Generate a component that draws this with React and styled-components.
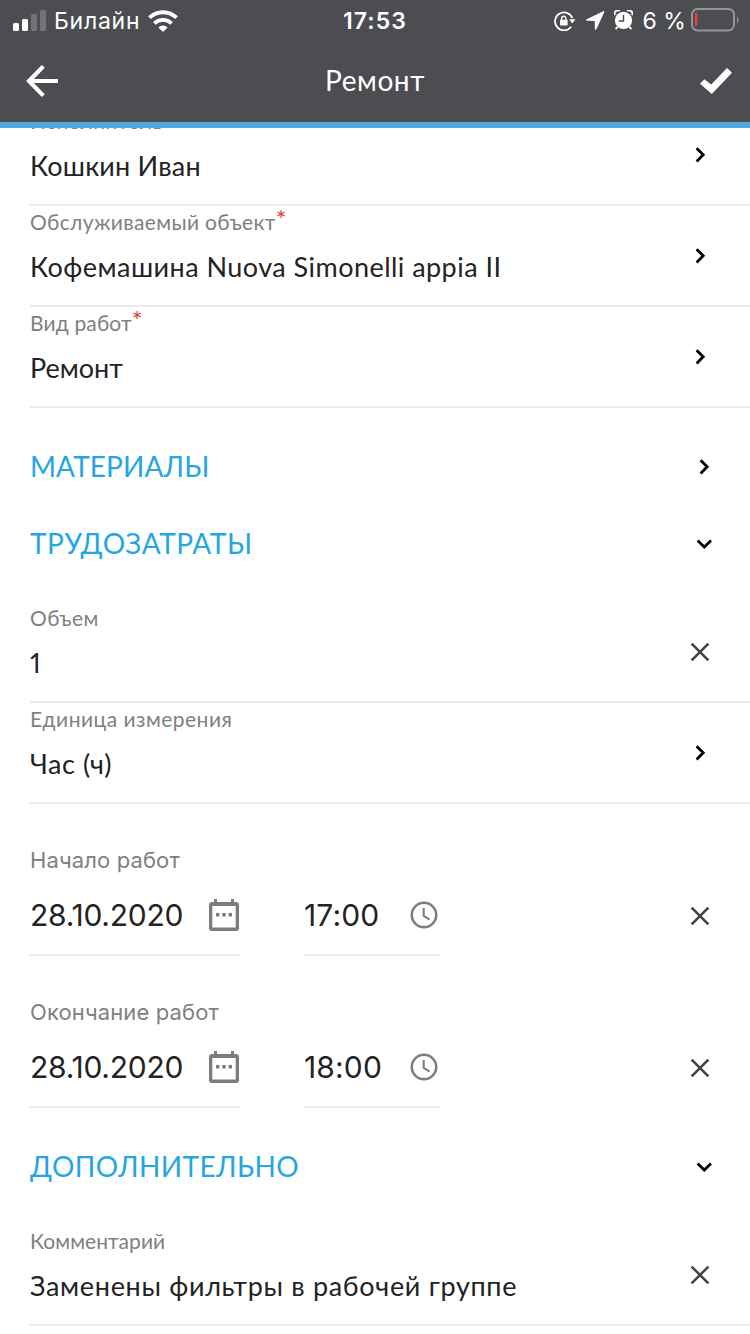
import React from 'react';
import styled, { createGlobalStyle } from 'styled-components';

const GlobalStyle = createGlobalStyle`
  * { box-sizing: border-box; }
  html, body { margin: 0; padding: 0; background: #fff; }
  svg { display: block; flex: none; }
`;

const textFont = 'Lato, "Open Sans", sans-serif';
const systemFont = 'Inter, Roboto, sans-serif';

const Screen = styled.div`
  width: 750px;
  height: 1334px;
  overflow: hidden;
  display: flex;
  flex-direction: column;
  background: #fff;
  color: #232323;
  font-family: ${textFont};
`;

const Header = styled.header`
  flex: none;
  height: 128px;
  background: #4c4d51;
  border-bottom: 6px solid #54a7df;
  color: #fff;
`;

const StatusBar = styled.div`
  display: grid;
  grid-template-columns: 1fr auto 1fr;
  align-items: center;
  height: 40px;
  padding: 0 11px 0 13px;
  font-family: ${systemFont};
  font-size: 23px;
  line-height: 40px;
`;

const StatusGroup = styled.div`
  display: flex;
  align-items: center;
  justify-content: ${(p) => (p.$end ? 'flex-end' : 'flex-start')};
`;

const Carrier = styled.span`
  margin: 1px 8px 0 7px;
  letter-spacing: 0.75px;
`;

const Clock = styled.span`
  margin: 1px 2px 0 0;
  font-weight: 600;
  letter-spacing: 1.1px;
`;

const Percent = styled.span`
  margin: 1px 5px 0 9px;
  letter-spacing: 0.1px;
`;

const TitleBar = styled.div`
  display: grid;
  grid-template-columns: 1fr auto 1fr;
  align-items: center;
  height: 82px;
  padding: 0 18px 0 26px;
`;

const Title = styled.h1`
  margin: 0 8px 3px 0;
  font-size: 28px;
  font-weight: 400;
  line-height: 40px;
  letter-spacing: 0.6px;
`;

const TitleAction = styled.div`
  display: flex;
  justify-content: ${(p) => (p.$end ? 'flex-end' : 'flex-start')};
`;

const Viewport = styled.main`
  flex: 1;
  min-height: 0;
  overflow: hidden;
`;

const Form = styled.div`
  margin-top: -23px;
`;

const Group = styled.section`
  padding-bottom: 20px;
`;

const FieldRow = styled.div`
  display: flex;
  align-items: center;
  justify-content: space-between;
  height: 101px;
  margin-left: 30px;
  padding-right: 40px;
  border-bottom: 2px solid #ebebeb;
`;

const FieldText = styled.div`
  align-self: flex-start;
  white-space: nowrap;
`;

const Label = styled.div`
  height: 32px;
  color: #808080;
  font-size: 21px;
  line-height: 32px;
  letter-spacing: ${(p) => p.$track ?? 0.35}px;
`;

const Required = styled.span`
  color: #d9413c;
  font-size: 25px;
  line-height: 0;
  vertical-align: 1px;
`;

const Value = styled.div`
  font-size: 27px;
  line-height: 57px;
  letter-spacing: ${(p) => p.$track ?? 0.46}px;
  font-variant-numeric: proportional-nums;
`;

const SectionRow = styled.div`
  display: flex;
  align-items: center;
  justify-content: space-between;
  height: 77px;
  padding: 0 36px 0 30px;
`;

const SectionTitle = styled.h2`
  margin: 0 0 1px;
  color: #26a6e0;
  font-size: 28px;
  font-weight: 400;
  line-height: 40px;
  letter-spacing: ${(p) => p.$track}px;
`;

const DateBlock = styled.div`
  height: 152px;
  padding: 40px 40px 0 30px;
  font-family: ${systemFont};
`;

const DateLabel = styled.div`
  color: #808080;
  font-size: 22px;
  line-height: 32px;
  letter-spacing: 0.12px;
`;

const DateInputs = styled.div`
  display: flex;
  align-items: center;
  height: 80px;
`;

const DateInput = styled.div`
  display: flex;
  align-items: center;
  justify-content: space-between;
  width: ${(p) => p.$width}px;
  height: 80px;
  margin-right: ${(p) => p.$gap || 0}px;
  padding-right: ${(p) => p.$inset}px;
  border-bottom: 2px solid #ebebeb;
  font-size: 30px;
  letter-spacing: ${(p) => p.$track}px;
  white-space: nowrap;
`;

const DateText = styled.span`
  margin-bottom: 1px;
`;

const Clear = styled.div`
  margin-left: auto;
`;

const ChevronRight = () => (
  <svg width="20" height="20" viewBox="0 0 20 20" fill="none" stroke="#000" strokeWidth="2.8">
    <path d="M6.6 3.2 13.2 9.8l-6.6 6.6" />
  </svg>
);

const ChevronDown = () => (
  <svg width="20" height="20" viewBox="0 0 20 20" fill="none" stroke="#000" strokeWidth="2.8">
    <path d="M3.6 6.6 10.3 13.1 17 6.6" />
  </svg>
);

const Cross = () => (
  <svg width="20" height="20" viewBox="0 0 20 20" fill="none" stroke="#444345" strokeWidth="2.6">
    <path d="M1.6 1.6l16.8 16.8M18.4 1.6 1.6 18.4" />
  </svg>
);

const CalendarIcon = () => (
  <svg width="30" height="32" viewBox="0 0 30 32" fill="#7d7d7d">
    <path
      fillRule="evenodd"
      d="M5 0h3v3h14V0h3v3h2a3 3 0 0 1 3 3v23a3 3 0 0 1-3 3H3a3 3 0 0 1-3-3V6a3 3 0 0 1 3-3h2zM3.3 7v21.6h23.4V7z"
    />
    <path d="M7 14h3.4v3.4H7zM13.3 14h3.4v3.4h-3.4zM19.6 14H23v3.4h-3.4z" />
  </svg>
);

const ClockIcon = () => (
  <svg width="28" height="28" viewBox="0 0 28 28" fill="none" stroke="#7d7d7d" strokeWidth="2.5">
    <circle cx="14" cy="14" r="12.2" />
    <path d="M13.7 7v8l6 3.6" strokeWidth="2.1" />
  </svg>
);

const BackIcon = () => (
  <svg width="32" height="34" viewBox="0 0 32 34" fill="none" stroke="#fff" strokeWidth="4.2">
    <path d="M17.3 2.4 3 17l14.3 14.6M3 17h29" />
  </svg>
);

const CheckIcon = () => (
  <svg width="32" height="26" viewBox="0 0 32 26" fill="#fff">
    <path d="M0 15.7 4.4 11.3l6.8 5.3L27 0l5 4.8L11.8 26z" />
  </svg>
);

const SignalIcon = () => (
  <svg width="34" height="24" viewBox="0 0 34 24" fill="#fff">
    <rect x="0" y="14" width="6" height="8" rx="1.6" />
    <rect x="9" y="10" width="6" height="12" rx="1.6" />
    <rect x="18" y="5" width="6" height="17" rx="1.6" opacity="0.22" />
    <rect x="27" y="1" width="6" height="21" rx="1.6" opacity="0.22" />
  </svg>
);

const WifiIcon = () => (
  <svg width="30" height="22" viewBox="0 0 30 22" fill="none" stroke="#fff">
    <path d="M1.5 7.7a19.2 19.2 0 0 1 27 0" strokeWidth="4" />
    <path d="M6.4 13.3a12.4 12.4 0 0 1 17.2 0" strokeWidth="3.7" />
    <path d="M15 22l-4.6-4.6a6.6 6.6 0 0 1 9.2 0z" fill="#fff" stroke="none" />
  </svg>
);

const RotationLockIcon = () => (
  <svg width="22" height="20" viewBox="0 0 22 20">
    <path d="M18.4 7a9 9 0 1 0-1.2 8.8" fill="none" stroke="#fff" strokeWidth="1.8" />
    <path d="M15.2 8.2h6.2l-3.1 4.2z" fill="#fff" />
    <rect x="6" y="8.8" width="7.6" height="5.8" rx="0.8" fill="#fff" />
    <path d="M7.7 9V7.4a2.1 2.1 0 0 1 4.2 0V9" fill="none" stroke="#fff" strokeWidth="1.4" />
  </svg>
);

const LocationIcon = () => (
  <svg width="19" height="19" viewBox="0 0 19 19" fill="#fff">
    <path d="M17.3.2.6 8.2c-.9.5-.7 1.6.4 1.6l7.8.1v7.8c0 1.1 1.2 1.3 1.7.3L18.2 1.3c.3-.8-.2-1.4-.9-1.1z" />
  </svg>
);

const AlarmIcon = () => (
  <svg width="19" height="22" viewBox="0 0 19 22">
    <path d="M.8 5.2A3.4 3.4 0 0 1 5.8 1M18.2 5.2A3.4 3.4 0 0 0 13.2 1" fill="none" stroke="#fff" strokeWidth="2" />
    <circle cx="9.5" cy="10.4" r="8.6" fill="#fff" />
    <path d="M3.8 16.6 1.6 19.2M15.2 16.6l2.2 2.6" stroke="#fff" strokeWidth="1.8" />
    <path d="M9.5 5v6H4.8" fill="none" stroke="#4c4d51" strokeWidth="1.4" />
  </svg>
);

const BatteryIcon = () => (
  <svg width="48" height="24" viewBox="0 0 48 24">
    <rect x="1" y="1" width="42" height="21.4" rx="5.5" fill="none" stroke="#939496" strokeWidth="2" />
    <rect x="4" y="5" width="2.2" height="13" rx="1" fill="#f8403b" />
    <path d="M46 8.2c2 1 2 6 0 7z" fill="#939496" />
  </svg>
);

const StatusIcon = styled.span`
  margin-right: ${(p) => p.$right || 0}px;
`;

const BatterySlot = styled.span`
  margin-bottom: 1px;
`;

function Field({ label, value, required, action, labelTrack, valueTrack }) {
  return (
    <FieldRow>
      <FieldText>
        <Label $track={labelTrack}>
          {label}
          {required && <Required>*</Required>}
        </Label>
        <Value $track={valueTrack}>{value}</Value>
      </FieldText>
      {action === 'clear' ? <Cross /> : <ChevronRight />}
    </FieldRow>
  );
}

function Section({ title, open, track }) {
  return (
    <SectionRow>
      <SectionTitle $track={track}>{title}</SectionTitle>
      {open ? <ChevronDown /> : <ChevronRight />}
    </SectionRow>
  );
}

function DateTime({ label, date, time }) {
  return (
    <DateBlock>
      <DateLabel>{label}</DateLabel>
      <DateInputs>
        <DateInput $width={210} $gap={64} $inset={1} $track={-0.25}>
          <DateText>{date}</DateText>
          <CalendarIcon />
        </DateInput>
        <DateInput $width={136} $inset={2} $track={0.15}>
          <DateText>{time}</DateText>
          <ClockIcon />
        </DateInput>
        <Clear>
          <Cross />
        </Clear>
      </DateInputs>
    </DateBlock>
  );
}

export default function App() {
  return (
    <>
      <GlobalStyle />
      <Screen>
        <Header>
          <StatusBar>
            <StatusGroup>
              <SignalIcon />
              <Carrier>Билайн</Carrier>
              <WifiIcon />
            </StatusGroup>
            <Clock>17:53</Clock>
            <StatusGroup $end>
              <StatusIcon $right={10}><RotationLockIcon /></StatusIcon>
              <StatusIcon $right={9}><LocationIcon /></StatusIcon>
              <StatusIcon><AlarmIcon /></StatusIcon>
              <Percent>6 %</Percent>
              <BatterySlot><BatteryIcon /></BatterySlot>
            </StatusGroup>
          </StatusBar>
          <TitleBar>
            <TitleAction><BackIcon /></TitleAction>
            <Title>Ремонт</Title>
            <TitleAction $end><CheckIcon /></TitleAction>
          </TitleBar>
        </Header>
        <Viewport>
          <Form>
            <Group>
              <Field label="Исполнитель" value="Кошкин Иван" valueTrack={0.2} />
              <Field label="Обслуживаемый объект" required value="Кофемашина Nuova Simonelli appia II" />
              <Field label="Вид работ" labelTrack={0.15} required value="Ремонт" valueTrack={0} />
            </Group>
            <Section title="МАТЕРИАЛЫ" track={0.1} />
            <Group>
              <Section title="ТРУДОЗАТРАТЫ" track={0.55} open />
            </Group>
            <Field label="Объем" labelTrack={0.4} value="1" action="clear" />
            <Field label="Единица измерения" labelTrack={0.48} value="Час (ч)" valueTrack={0.55} />
            <DateTime label="Начало работ" date="28.10.2020" time="17:00" />
            <Group>
              <DateTime label="Окончание работ" date="28.10.2020" time="18:00" />
            </Group>
            <Group>
              <Section title="ДОПОЛНИТЕЛЬНО" track={0.45} open />
            </Group>
            <Field
              label="Комментарий"
              labelTrack={0.05}
              value="Заменены фильтры в рабочей группе"
              valueTrack={0.68}
              action="clear"
            />
          </Form>
        </Viewport>
      </Screen>
    </>
  );
}
